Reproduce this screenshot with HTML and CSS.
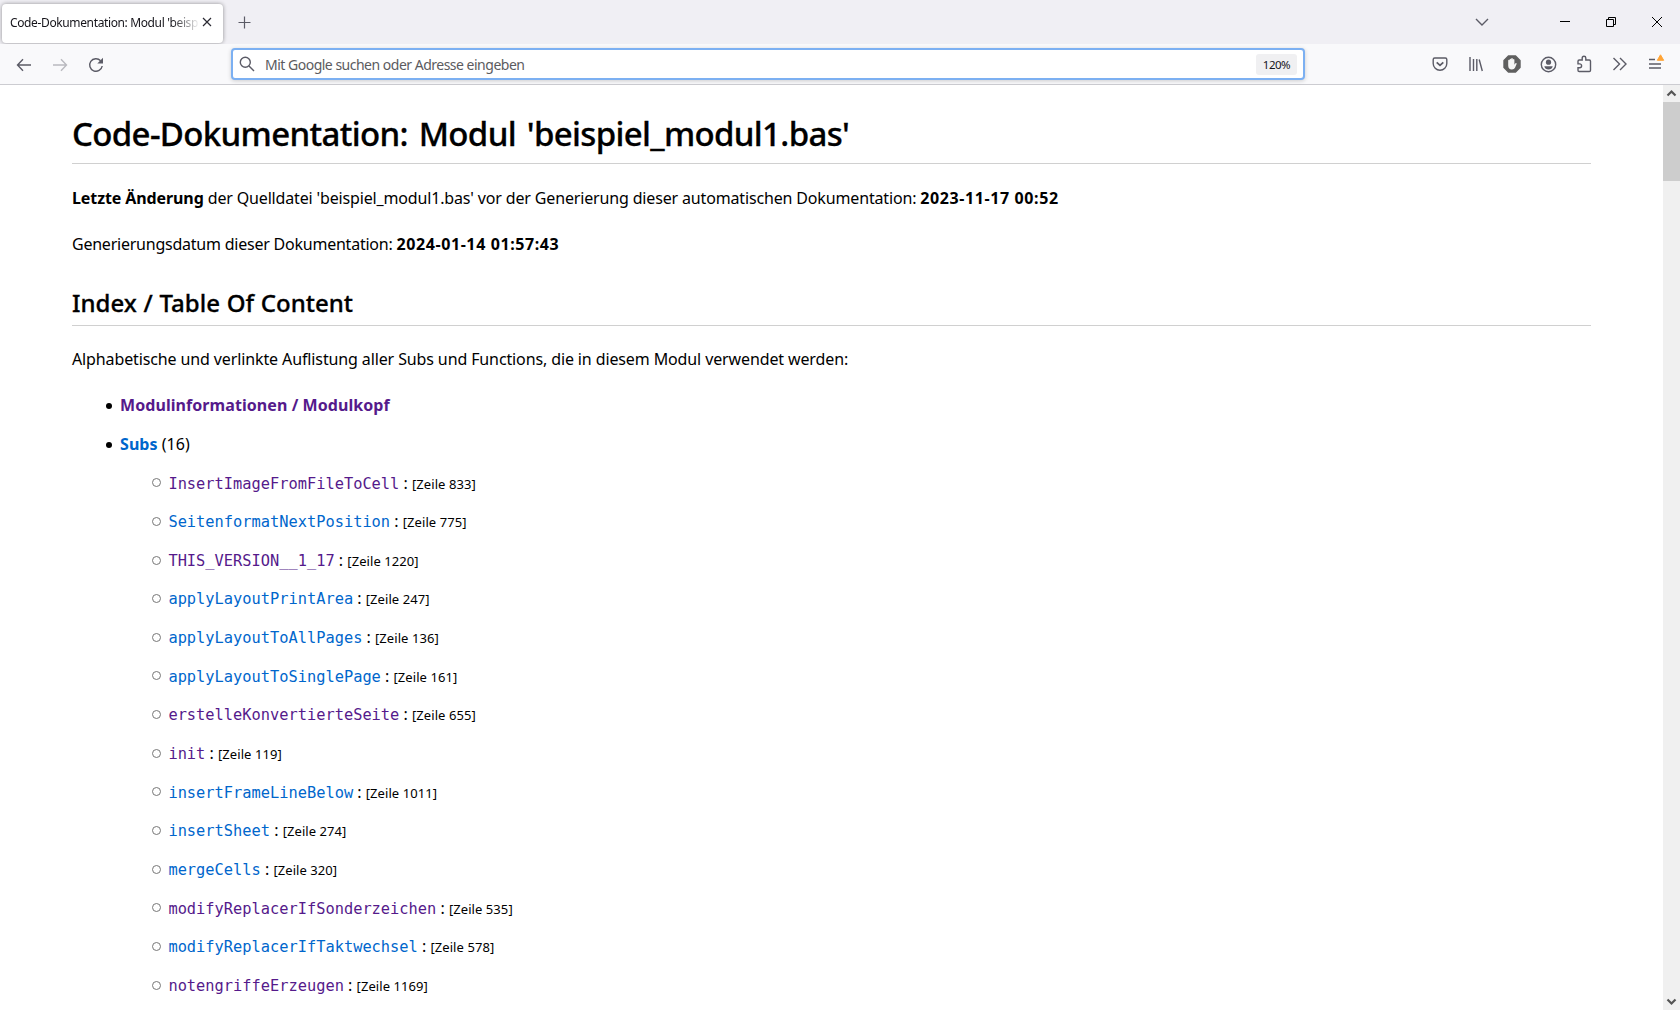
FILE: index.html
```html
<!DOCTYPE html>
<html lang="de">
<head>
<meta charset="utf-8">
<title>Code-Dokumentation: Modul 'beispiel_modul1.bas'</title>
<link rel="stylesheet" href="styles.css">
</head>
<body>
<header class="tabbar">
  <div class="tab">
    <span class="tab-title">Code-Dokumentation: Modul 'beisp</span>
    <svg class="tab-close" width="10" height="10" viewBox="0 0 10 10"><path d="M1 1l8 8M9 1l-8 8"/></svg>
  </div>
  <svg class="new-tab" width="13" height="13" viewBox="0 0 13 13"><path d="M6.5 .5v12M.5 6.5h12"/></svg>
  <div class="window-buttons">
    <svg class="tabs-list" width="14" height="8" viewBox="0 0 14 8"><path d="M1 1l6 6 6-6"/></svg>
    <svg class="minimize" width="10" height="10" viewBox="0 0 10 10"><path d="M0 4.5h10"/></svg>
    <svg class="restore" width="10" height="10" viewBox="0 0 10 10"><path d="M.5 2.5h7v7h-7zM2.5 2.5v-2h7v7h-2"/></svg>
    <svg class="close" width="10" height="10" viewBox="0 0 10 10"><path d="M0 0l10 10M10 0L0 10"/></svg>
  </div>
</header>
<nav class="toolbar">
  <div class="nav-buttons">
    <svg width="16" height="16" viewBox="0 0 16 16"><path d="M15 8H1.5M7 2.2L1.5 8 7 13.8"/></svg>
    <svg class="disabled" width="16" height="16" viewBox="0 0 16 16"><path d="M1 8h13.5M9 2.2L14.5 8 9 13.8"/></svg>
    <svg width="16" height="16" viewBox="0 0 16 16"><path d="M14.2 9A6.3 6.3 0 1 1 12.6 3.7"/><path class="solid" d="M15 .8v5.7H9.3z"/></svg>
  </div>
  <div class="urlbar">
    <svg class="search" width="16" height="16" viewBox="0 0 16 16"><circle cx="6.3" cy="6.3" r="5"/><path d="M10 10l5 5"/></svg>
    <span class="placeholder">Mit Google suchen oder Adresse eingeben</span>
    <span class="zoom-level">120%</span>
  </div>
  <div class="tools">
    <svg width="16" height="16" viewBox="0 0 16 16"><path d="M2.7 2h10.6a1.5 1.5 0 0 1 1.5 1.5V7.500a6.8 6.8 0 0 1-13.6 0V3.500A1.5 1.5 0 0 1 2.7 2z"/><path class="thick" d="M4.7 6.300L8 9.300l3.300-3"/></svg>
    <svg width="16" height="16" viewBox="0 0 16 16"><path d="M2 1v14M5.5 3v12M8.800 3v12M11.200 3.500L14.300 15"/></svg>
    <svg width="18" height="18" viewBox="0 0 18 18"><path class="blocker" d="M5.500 1h7L17 5.500v7L12.500 17h-7L1 12.500v-7z"/><path class="hand" d="M5.200 8.200V5.300q.7-.9 1.400 0V4.200q.8-1 1.600 0V3.500q.8-.9 1.600 0v1q.8-.9 1.600 0v5.300l1-1.500q1-.6 1.300.4l-1.700 4q-.8 1.800-3 1.800-3.800 0-3.800-4z"/></svg>
    <svg width="17" height="17" viewBox="0 0 17 17"><circle cx="8.5" cy="8.5" r="7.2"/><circle class="solid" cx="8.5" cy="6.2" r="2.6"/><path class="solid" d="M4.300 10.200h8.400q-.8 3.300-4.200 3.300t-4.200-3.300z"/></svg>
    <svg width="16" height="18" viewBox="0 0 16 18"><path d="M2 7.500V6.200A1.200 1.200 0 0 1 3.200 5h3V3a1.800 1.800 0 0 1 3.600 0v2h3.500a1.200 1.200 0 0 1 1.200 1.200v9.100a1.200 1.200 0 0 1-1.200 1.200H3.200A1.200 1.200 0 0 1 2 15.300v-2.600h1.700a1.900 1.900 0 0 0 0-3.800H2z"/></svg>
    <svg width="16" height="16" viewBox="0 0 16 16"><path d="M1.500 2l6 6-6 6M8 2l6 6-6 6"/></svg>
    <svg width="18" height="20" viewBox="0 0 18 20"><path d="M2 5.500h6M2 10h12M2 14h12"/><path class="alert" d="M13.500 .8L16.700 6.300H10.300z"/></svg>
  </div>
</nav>
<div class="viewport">
  <main class="page">
    <h1>Code-Dokumentation: Modul 'beispiel_modul1.bas'</h1>
    <p class="changed"><b>Letzte Änderung</b> der Quelldatei 'beispiel_modul1.bas' vor der Generierung dieser automatischen Dokumentation: <b class="date">2023-11-17 00:52</b></p>
    <p class="generated">Generierungsdatum dieser Dokumentation: <b class="date">2024-01-14 01:57:43</b></p>
    <h2>Index / Table Of Content</h2>
    <p class="intro">Alphabetische und verlinkte Auflistung aller Subs und Functions, die in diesem Modul verwendet werden:</p>
    <ul class="index">
      <li><a class="visited"><b>Modulinformationen / Modulkopf</b></a></li>
      <li><a><b>Subs</b></a> (16)
        <ul class="subs">
          <li><a class="visited"><code>InsertImageFromFileToCell</code></a> : <small>[Zeile 833]</small></li>
          <li><a><code>SeitenformatNextPosition</code></a> : <small>[Zeile 775]</small></li>
          <li><a class="visited"><code>THIS_VERSION__1_17</code></a> : <small>[Zeile 1220]</small></li>
          <li><a><code>applyLayoutPrintArea</code></a> : <small>[Zeile 247]</small></li>
          <li><a><code>applyLayoutToAllPages</code></a> : <small>[Zeile 136]</small></li>
          <li><a><code>applyLayoutToSinglePage</code></a> : <small>[Zeile 161]</small></li>
          <li><a class="visited"><code>erstelleKonvertierteSeite</code></a> : <small>[Zeile 655]</small></li>
          <li><a class="visited"><code>init</code></a> : <small>[Zeile 119]</small></li>
          <li><a><code>insertFrameLineBelow</code></a> : <small>[Zeile 1011]</small></li>
          <li><a><code>insertSheet</code></a> : <small>[Zeile 274]</small></li>
          <li><a><code>mergeCells</code></a> : <small>[Zeile 320]</small></li>
          <li><a class="visited"><code>modifyReplacerIfSonderzeichen</code></a> : <small>[Zeile 535]</small></li>
          <li><a><code>modifyReplacerIfTaktwechsel</code></a> : <small>[Zeile 578]</small></li>
          <li><a class="visited"><code>notengriffeErzeugen</code></a> : <small>[Zeile 1169]</small></li>
        </ul>
      </li>
    </ul>
  </main>
  <div class="scrollbar">
    <svg width="17" height="17" viewBox="0 0 17 17"><path d="M4.500 10.500l4-4 4 4"/></svg>
    <div class="thumb"></div>
    <svg width="17" height="17" viewBox="0 0 17 17"><path d="M4.500 6.500l4 4 4-4"/></svg>
  </div>
</div>
</body>
</html>
```
FILE: styles.css
```css
* { box-sizing: border-box; }

body {
  margin: 0;
  width: 1680px;
  height: 1010px;
  overflow: hidden;
  display: flex;
  flex-direction: column;
  background: #fff;
  color: #000;
  font: 16px/24px "Noto Sans", "Open Sans", sans-serif;
}

svg { flex: none; fill: none; stroke: #5b5b66; stroke-width: 1.4; }

/* Tab strip */
.tabbar {
  flex: none;
  height: 44px;
  padding: 4px 18px 0 2px;
  display: flex;
  align-items: flex-start;
  background: #f0eff4;
}
.tab {
  width: 221px;
  height: 39px;
  padding: 0 11px 2px 8px;
  display: flex;
  align-items: center;
  background: #fff;
  border-radius: 4px;
  box-shadow: 0 0 4px rgba(0, 0, 0, .4);
}
.tab-title {
  width: 190px;
  white-space: nowrap;
  font-size: 12px;
  letter-spacing: -.37px;
  color: #15141a;
  -webkit-mask-image: linear-gradient(to left, transparent, #000 28px);
  mask-image: linear-gradient(to left, transparent, #000 28px);
}
.tab-close { margin: -1px 0 0 2px; stroke: #2b2a33; stroke-width: 1.2; }
.new-tab { margin: 12px 0 0 15px; stroke-width: 1.2; }
.window-buttons {
  margin: 12px 0 0 auto;
  display: flex;
  align-items: center;
  height: 12px;
}
.window-buttons svg { stroke: #000; stroke-width: 1; }
.window-buttons .tabs-list { margin-right: 71px; stroke: #5b5b66; stroke-width: 1.4; }
.minimize, .restore { margin-right: 36px; }

/* Navigation toolbar */
.toolbar {
  flex: none;
  height: 41px;
  display: flex;
  align-items: center;
  padding: 0 15px 0 16px;
  background: #f9f9fb;
  border-bottom: 1px solid #ccccd1;
}
.nav-buttons { width: 215px; padding-top: 1px; display: flex; gap: 20px; }
.disabled { opacity: .4; }
svg .solid { fill: #5b5b66; stroke: none; }
.urlbar {
  width: 1074px;
  height: 32px;
  padding: 0 6px;
  display: flex;
  align-items: center;
  background: #fff;
  border: 2px solid #7cb0f2;
  border-radius: 4px;
  box-shadow: 0 1px 4px rgba(0, 0, 0, .18);
}
.placeholder {
  margin-left: 10px;
  padding-top: 2px;
  font-size: 14px;
  letter-spacing: -.5px;
  color: #5b5b60;
}
.zoom-level {
  width: 41px;
  height: 21px;
  margin-left: auto;
  border-radius: 3px;
  background: #f0f0f2;
  text-align: center;
  font-size: 11.5px;
  line-height: 21px;
  letter-spacing: -.5px;
  color: #15141a;
}
.tools {
  margin-left: auto;
  display: flex;
  align-items: center;
  gap: 19.3px;
}
svg .thick { stroke-width: 1.8; }
svg .blocker { fill: #5f5f5f; stroke: #5f5f5f; }
svg .hand { fill: #f4f4f4; stroke: none; }
svg .alert { fill: #ffa436; stroke: #ffa436; stroke-linejoin: round; stroke-width: 1; }

/* Page content */
.viewport { flex: 1; min-height: 0; display: flex; }
.page { flex: 1; overflow: hidden; padding: 26px 72px 0; white-space: nowrap; }
h1, h2, p, ul { margin: 0; }
h1, h2 {
  font-weight: 500;
  border-bottom: 1px solid #d0d0d0;
  -webkit-text-stroke: .3px #000;
}
h1 {
  padding-bottom: 6px;
  margin-bottom: 22px;
  font-size: 33px;
  line-height: 46px;
  letter-spacing: -.66px;
  word-spacing: 3px;
}
h2 {
  margin-top: 29px;
  padding-bottom: 4px;
  margin-bottom: 21px;
  font-size: 24px;
  line-height: 36px;
  word-spacing: .5px;
}
.changed { margin-bottom: 22px; letter-spacing: -.155px; }
.changed b:first-child { letter-spacing: -.1px; }
.generated { letter-spacing: -.23px; }
.intro { margin-bottom: 22px; letter-spacing: -.12px; }
.changed .date, .generated .date { letter-spacing: .6px; }

/* Linked index */
ul { padding: 0; list-style: none; }
a { color: #0066cc; }
a.visited { color: #551a8b; }
.index { padding-left: 48px; }
.index > li { margin-bottom: 15px; }
.index > li > a { letter-spacing: .07px; }
.index > li::before {
  content: "";
  display: inline-block;
  width: 6px;
  height: 6px;
  margin: 0 8px 0 -14px;
  vertical-align: 2px;
  border-radius: 50%;
  background: #000;
}
.subs { padding: 7.5px 0 0 48px; }
.subs li { line-height: 38.66px; height: 38.66px; }
.subs li::before {
  content: "";
  display: inline-block;
  width: 7px;
  height: 7px;
  margin: 0 7.4px 0 -16px;
  vertical-align: 1.3px;
  border: 1px solid #777;
  border-radius: 50%;
}
code { font: 15.35px/1 "DejaVu Sans Mono", monospace; }
small { font-size: 13px; line-height: 1; letter-spacing: .07px; }

/* Scrollbar */
.scrollbar {
  width: 17px;
  display: flex;
  flex-direction: column;
  background: #f0f0f0;
}
.scrollbar svg { stroke: #555; stroke-width: 2.2; }
.thumb { height: 79px; margin-bottom: auto; background: #cdcdcd; }
```
